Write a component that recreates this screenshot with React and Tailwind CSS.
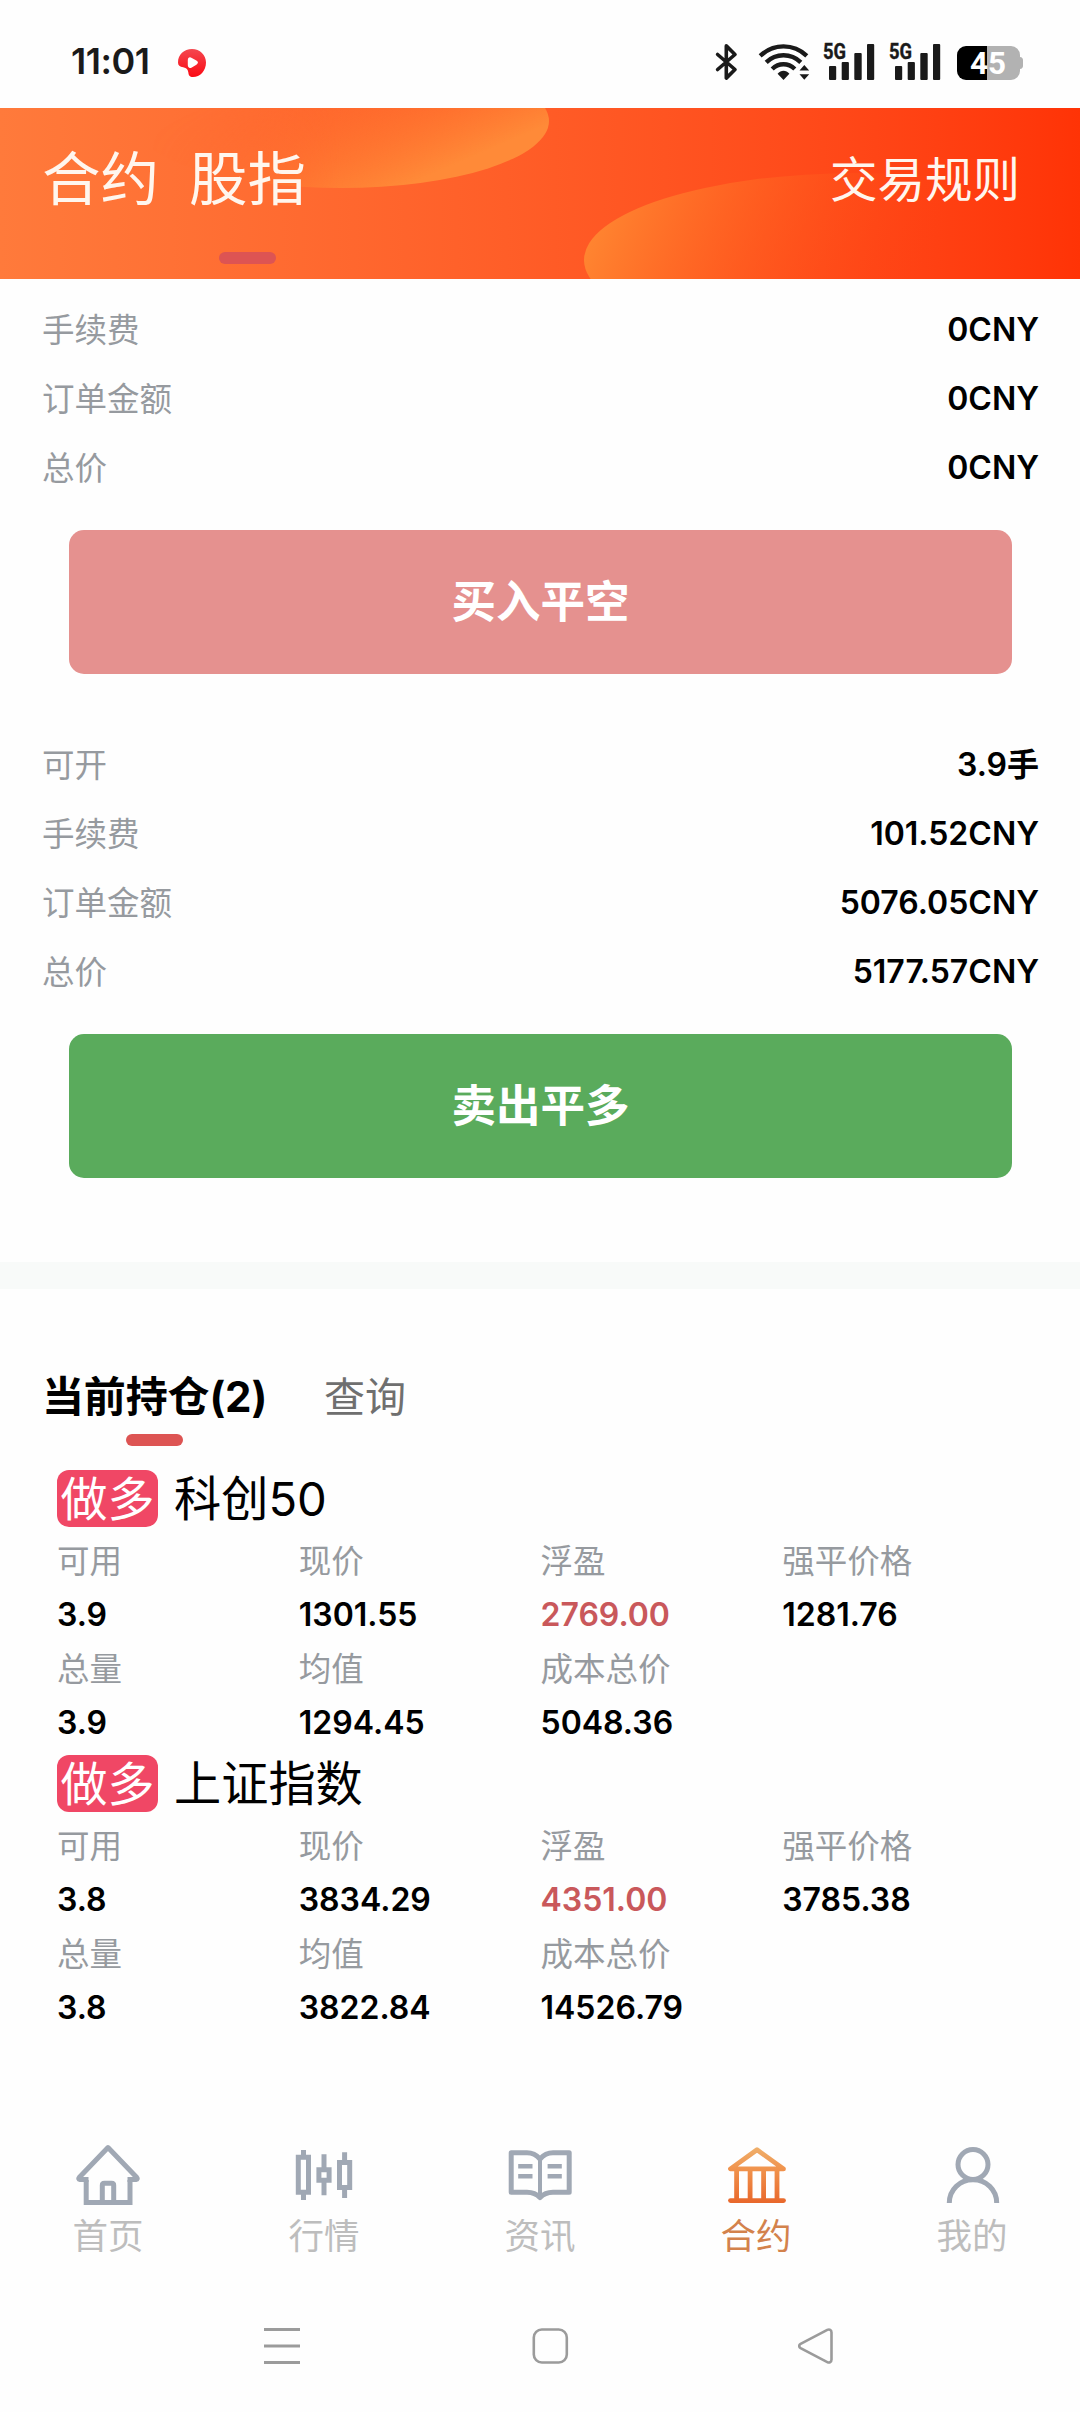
const navItems = [
  { label: '首页', icon: HomeIcon },
  { label: '行情', icon: CandlesIcon },
  { label: '资讯', icon: BookIcon },
  { label: '合约', icon: BankIcon, active: true },
  { label: '我的', icon: UserIcon },
]

const buyRows = [
  { label: '手续费', value: '0CNY' },
  { label: '订单金额', value: '0CNY' },
  { label: '总价', value: '0CNY' },
]

const sellRows = [
  { label: '可开', value: '3.9手' },
  { label: '手续费', value: '101.52CNY' },
  { label: '订单金额', value: '5076.05CNY' },
  { label: '总价', value: '5177.57CNY' },
]

const positions = [
  {
    side: '做多',
    name: '科创50',
    cells: [
      { label: '可用', value: '3.9' },
      { label: '现价', value: '1301.55' },
      { label: '浮盈', value: '2769.00', profit: true },
      { label: '强平价格', value: '1281.76' },
      { label: '总量', value: '3.9' },
      { label: '均值', value: '1294.45' },
      { label: '成本总价', value: '5048.36' },
    ],
  },
  {
    side: '做多',
    name: '上证指数',
    cells: [
      { label: '可用', value: '3.8' },
      { label: '现价', value: '3834.29' },
      { label: '浮盈', value: '4351.00', profit: true },
      { label: '强平价格', value: '3785.38' },
      { label: '总量', value: '3.8' },
      { label: '均值', value: '3822.84' },
      { label: '成本总价', value: '14526.79' },
    ],
  },
]

function HomeIcon() {
  return (
    <svg width="64" height="64" viewBox="0 0 64 64" fill="none" stroke="#a0a8b4" strokeWidth="5">
      <path d="M10.2 36V58.6H54V36" />
      <path d="M12.5 35.5H3.6c-.8 0-1.2-1-.4-1.9L32 3.6l28.8 30c.8.9.4 1.9-.4 1.9H51.5" strokeLinejoin="round" />
      <path d="M26.3 58V41.2c0-1.2.8-2 2-2h7.4c1.2 0 2 .8 2 2V58" />
    </svg>
  )
}

function CandlesIcon() {
  return (
    <svg width="64" height="64" viewBox="0 0 64 64" fill="none" stroke="#a0a8b4" strokeWidth="5">
      <path d="M6.3 13.2h10.2v35H6.3zM26.9 25.8h10.2v10.4H26.9zM47.5 18.5h10.2v25H47.5z" />
      <path d="M11.5 6v6M11.5 50v6M32 10.3v14M32 38v13.3M52.6 8.3v9M52.6 45v9" />
    </svg>
  )
}

function BookIcon() {
  return (
    <svg width="64" height="64" viewBox="0 0 64 64" fill="none" stroke="#a0a8b4" strokeWidth="5" strokeLinejoin="round">
      <path d="M32 15c-3.5-4-8-6.2-13-6.2H3.2v39.4H19c5 0 9.5 1.6 13 5.4 3.5-3.8 8-5.4 13-5.4h16.2V8.8H45c-5 0-9.5 2.2-13 6.2z" />
      <path d="M32 15v38" strokeWidth="4" />
      <path d="M10.2 22.2h14.3M10.2 32.2h14.3M39.6 22.2h14.2M39.6 32.2h14.2" strokeWidth="4.4" />
    </svg>
  )
}

function BankIcon() {
  return (
    <svg width="64" height="64" viewBox="0 0 64 64" fill="none" stroke="url(#bank)" strokeWidth="4.8">
      <defs>
        <linearGradient id="bank" gradientUnits="userSpaceOnUse" x1="32" y1="3" x2="32" y2="60">
          <stop offset="0" stopColor="#efb06c" />
          <stop offset="0.4" stopColor="#f0924c" />
          <stop offset="1" stopColor="#e8662a" />
        </linearGradient>
      </defs>
      <path d="M33 5.8 6.5 24.9h53z" strokeLinejoin="round" />
      <path d="M12.6 25v31M26.1 25v31M39.6 25v31M53 25v31" />
      <path d="M6.500 56.600h53" strokeLinecap="round" />
    </svg>
  )
}

function UserIcon() {
  return (
    <svg width="64" height="64" viewBox="0 0 64 64" fill="none" stroke="#a0a8b4" strokeWidth="5">
      <circle cx="33" cy="20.5" r="15" />
      <path d="M9.3 59c0-13.5 10.6-23.2 23.7-23.2S56.7 45.5 56.7 59" />
    </svg>
  )
}

function PlayLogo() {
  return (
    <svg width="30" height="30" viewBox="0 0 30 30">
      <defs>
        <linearGradient id="play" x1="0" y1="0" x2="0" y2="1">
          <stop offset="0" stopColor="#f4474f" />
          <stop offset="1" stopColor="#fb0a14" />
        </linearGradient>
      </defs>
      <path d="M15 1c8 0 14 6 14 13.5C29 23 23 29 16 29c-3.5 0-4.3-1.6-4.6-4.2-.3-3.2-1.8-5-5.2-5.6C2.8 18.6 1 17.6 1 14.5 1 6.5 7 1 15 1z" fill="url(#play)" />
      <path d="M10.8 12.2c0-2.6 1.8-3.6 4-2.3l4.6 2.7c2.1 1.2 2.1 2.9 0 4.1l-4.6 2.7c-2.2 1.3-4 .3-4-2.3z" fill="#fff" />
    </svg>
  )
}

function BluetoothIcon() {
  return (
    <svg width="23" height="38" viewBox="0 0 23 38" fill="none" stroke="#1a1a1a" strokeWidth="3.6" strokeLinejoin="round" strokeLinecap="round">
      <path d="M2.6 11.5 20 26.5l-8.7 8.6V2.9L20 11.5 2.6 26.5" />
    </svg>
  )
}

function WifiIcon() {
  return (
    <svg width="52" height="38" viewBox="0 0 52 38" fill="none" stroke="#1a1a1a" strokeWidth="4.4">
      <path d="M2.2 12.8C15.5.2 35.5.2 48.8 12.8" />
      <path d="M8.2 19.3c9.8-9.4 24.8-9.4 34.6 0" />
      <path d="M14.2 26c6.5-6.4 16-6.4 22.6 0" />
      <path d="M19.6 30.8c3.3-4 8.5-4 11.8 0l-5.9 6.2z" fill="#1a1a1a" stroke="none" />
      <path d="M41.5 27.5 46.3 22l4.9 5.5zM41.5 31.2h9.7l-4.9 5.5z" fill="#1a1a1a" stroke="none" />
    </svg>
  )
}

function SignalIcon() {
  return (
    <svg width="52" height="50" viewBox="0 -12 52 50" fill="#1a1a1a">
      <text x="0" y="16" fontSize="22.5" fontWeight="700" fontFamily="Roboto, sans-serif" stroke="#1a1a1a" strokeWidth="0.4" textLength="23" lengthAdjust="spacingAndGlyphs">5G</text>
      <rect x="6" y="23" width="7.2" height="14" rx="1" />
      <rect x="18.7" y="19" width="7.2" height="18" rx="1" />
      <rect x="31.3" y="10" width="7.4" height="27" rx="1" />
      <rect x="44" y="1" width="7.2" height="36" rx="1" />
    </svg>
  )
}

function BatteryIcon() {
  return (
    <svg width="66" height="50" viewBox="0 -8 66 50">
      <path d="M30 0h24a9 9 0 0 1 9 9v2c2 0 3 1.5 3 3v6c0 1.5-1 3-3 3v2a9 9 0 0 1-9 9H30z" fill="#b2b2b2" />
      <path d="M30 0v34H9a9 9 0 0 1-9-9V9a9 9 0 0 1 9-9z" fill="#000" />
      <text x="13" y="28" fontSize="31" fontWeight="700" fontFamily="Roboto, sans-serif" fill="#fff" textLength="36" lengthAdjust="spacingAndGlyphs">45</text>
    </svg>
  )
}

function StatusBar() {
  return (
    <div className="flex h-[108px] items-start pl-[71px] pr-[57px]">
      <span className="mt-[43px] w-[78px] whitespace-nowrap text-[36px] font-semibold leading-9 tracking-[-0.5px] text-[#1a1a1a]">11:01</span>
      <div className="ml-[28px] mt-[48px]">
        <PlayLogo />
      </div>
      <div className="ml-auto flex items-start">
        <div className="mt-[43px]"><BluetoothIcon /></div>
        <div className="ml-[20px] mt-[43px]"><WifiIcon /></div>
        <div className="ml-[13px] mt-[31px]"><SignalIcon /></div>
        <div className="ml-[14px] mt-[31px]"><SignalIcon /></div>
        <div className="ml-[16px] mt-[38px]"><BatteryIcon /></div>
      </div>
    </div>
  )
}

function Header() {
  return (
    <header className="relative flex h-[171px] items-start justify-between overflow-hidden bg-linear-to-r from-[#ff7a3b] to-[#ff3306] pl-[42px] pr-[60px] text-[#fff6ee]">
      <svg className="absolute inset-0" width="1080" height="171" viewBox="0 0 1080 171">
        <defs>
          <linearGradient id="blobTop" gradientUnits="userSpaceOnUse" x1="400" y1="80" x2="340" y2="-60">
            <stop offset="0" stopColor="#ff8a38" />
            <stop offset="1" stopColor="#ff5e24" stopOpacity="0" />
          </linearGradient>
          <linearGradient id="fadeTop" gradientUnits="userSpaceOnUse" x1="150" y1="0" x2="340" y2="0">
            <stop offset="0" stopColor="#000" />
            <stop offset="1" stopColor="#fff" />
          </linearGradient>
          <mask id="maskTop">
            <rect width="1080" height="171" fill="url(#fadeTop)" />
          </mask>
          <linearGradient id="blobRight" gradientUnits="userSpaceOnUse" x1="600" y1="110" x2="900" y2="230">
            <stop offset="0" stopColor="#ff8430" />
            <stop offset="1" stopColor="#ff4210" stopOpacity="0" />
          </linearGradient>
        </defs>
        <ellipse cx="341" cy="13" rx="208" ry="67" fill="url(#blobTop)" mask="url(#maskTop)" />
        <ellipse cx="859" cy="152" rx="275" ry="87" fill="url(#blobRight)" />
      </svg>
      <div className="relative flex gap-[30px] pt-[42px] text-[58.5px] font-normal leading-[58px]">
        <span>合约</span>
        <div className="flex flex-col items-center">
          <span>股指</span>
          <span className="mt-[44px] h-3 w-[57px] rounded-full bg-[#dd5453]" />
        </div>
      </div>
      <span className="relative pt-[48px] text-[47.5px] font-normal leading-[48px]">交易规则</span>
    </header>
  )
}

function InfoRows({ rows }) {
  return rows.map((row) => (
    <div key={row.label} className="flex h-[69px] items-center justify-between pl-[42px] pr-[41px]">
      <span className="pt-0.5 text-[32.5px] font-normal leading-[40px] text-[#969a9f]">{row.label}</span>
      <span className="text-[32px] font-semibold leading-[40px] text-black">{row.value}</span>
    </div>
  ))
}

function Position({ position }) {
  return (
    <article className="h-[285px]">
      <div className="flex h-[69px] items-center">
        <span className="grid h-[57px] w-[101px] place-items-center rounded-xl bg-[#f04765] text-[47px] font-normal leading-[57px] text-white">
          {position.side}
        </span>
        <span className="ml-[16px] text-[47.2px] font-normal leading-[57px] text-black">{position.name}</span>
      </div>
      <div className="grid grid-cols-4 pt-px">
        {position.cells.map((cell) => (
          <div key={cell.label} className="flex h-[108px] flex-col">
            <span className="h-[54px] text-[32.5px] font-normal leading-[56px] text-[#969a9f]">{cell.label}</span>
            <span className={`h-[54px] text-[32px] font-semibold leading-[54px] ${cell.profit ? 'text-[#c9585b]' : 'text-black'}`}>
              {cell.value}
            </span>
          </div>
        ))}
      </div>
    </article>
  )
}

function BottomNav() {
  return (
    <nav className="grid h-[140px] grid-cols-5">
      {navItems.map(({ label, icon: Icon, active }) => (
        <div key={label} className="flex flex-col items-center">
          <Icon />
          <span className={`mt-[9px] text-[35.5px] font-normal leading-10 ${active ? 'text-[#d3824c]' : 'text-[#bdbdbd]'}`}>{label}</span>
        </div>
      ))}
    </nav>
  )
}

function SystemNav() {
  return (
    <div className="mt-[43px] flex items-center pl-[264px] text-[#9b9b9b]">
      <svg width="36" height="38" viewBox="0 0 36 38" stroke="currentColor" strokeWidth="3">
        <path d="M0 2.5h36M0 19h36M0 35.5h36" />
      </svg>
      <svg className="ml-[232px]" width="37" height="38" viewBox="0 0 37 38" fill="none" stroke="currentColor" strokeWidth="2.6">
        <rect x="1.8" y="2.5" width="33" height="33" rx="8" />
      </svg>
      <svg className="ml-[229px]" width="36" height="38" viewBox="0 0 36 38" fill="none" stroke="currentColor" strokeWidth="2.6">
        <path d="M2.6 16.9 29.3 2.9c2.2-1.1 4.2 0 4.2 2.5v27.2c0 2.500-2 3.600-4.200 2.500L2.600 21.100c-1.900-1.100-1.900-3.100 0-4.200z" />
      </svg>
    </div>
  )
}

export default function App() {
  return (
    <div className="flex h-[2412px] w-[1080px] flex-col overflow-hidden bg-[#fefefe] font-['Inter','Noto_Sans_CJK_SC',sans-serif]">
      <StatusBar />
      <Header />
      <section className="pt-4">
        <InfoRows rows={buyRows} />
        <button type="button" className="ml-[69px] mt-[28px] block h-[144px] w-[943px] rounded-[15px] bg-[#e5918f] text-[44.5px] font-bold text-white">
          买入平空
        </button>
        <div className="mt-[56px]">
          <InfoRows rows={sellRows} />
        </div>
        <button type="button" className="ml-[69px] mt-[28px] block h-[144px] w-[943px] rounded-[15px] bg-[#5aab5c] text-[44.5px] font-bold text-white">
          卖出平多
        </button>
      </section>
      <div className="mt-[84px] h-[27px] bg-[#f8faf9]" />
      <section className="mt-[80px] pl-[42px]">
        <div className="flex h-[95px] items-start gap-[57px]">
          <div className="flex flex-col items-center">
            <span className="text-[42px] font-bold leading-[56px] tracking-[-0.15px] text-black">当前持仓(2)</span>
            <span className="mt-[9px] h-3 w-[57px] rounded-full bg-[#dd5453]" />
          </div>
          <span className="text-[41px] font-normal leading-[56px] text-[#6f6f6f]">查询</span>
        </div>
        <div className="pl-[15px] pr-[56px]">
          {positions.map((position) => (
            <Position key={position.name} position={position} />
          ))}
        </div>
      </section>
      <div className="mt-auto h-[268px]">
        <BottomNav />
        <SystemNav />
      </div>
    </div>
  )
}
